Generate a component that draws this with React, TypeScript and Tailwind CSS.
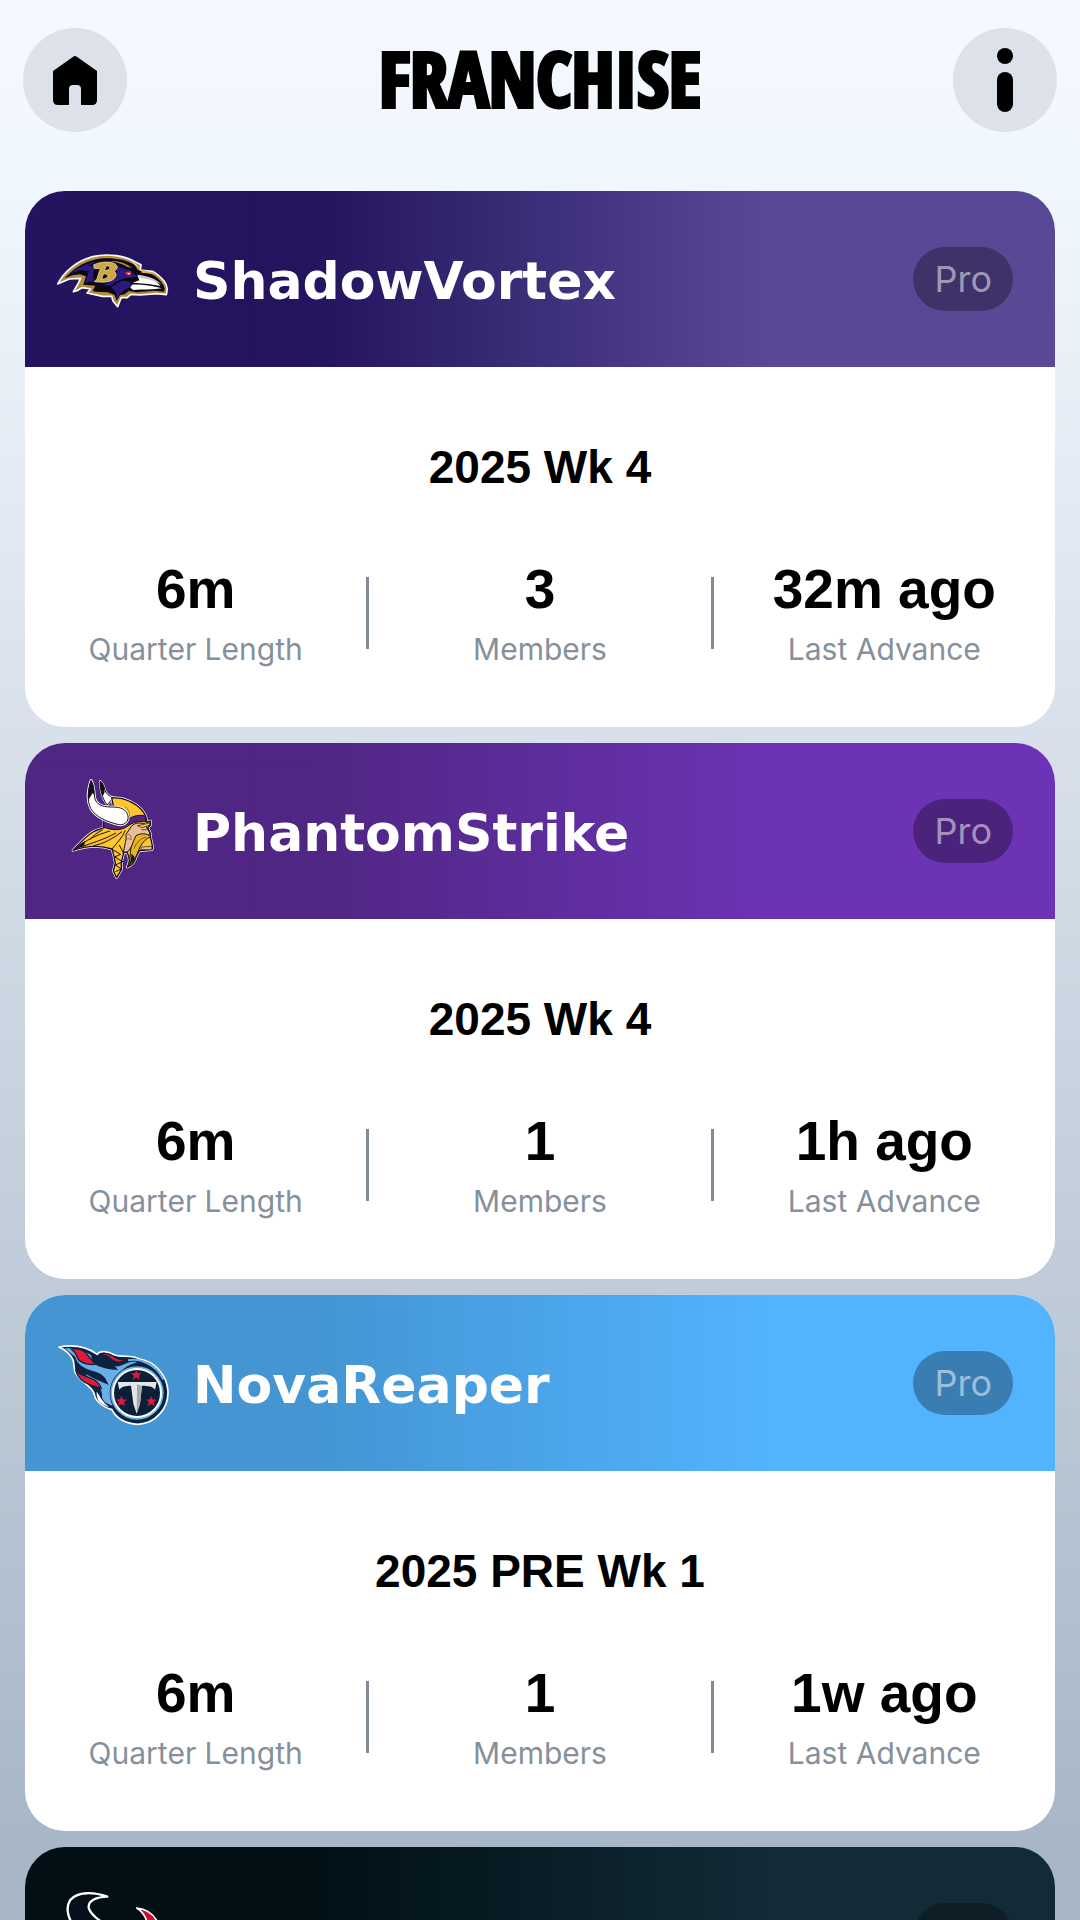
import React from 'react';

interface Franchise {
  id: string;
  name?: string;
  level: string;
  season?: string;
  gradient: string;
  logo: React.ReactNode;
  stats?: { label: string; value: string }[];
}

const RavenLogo: React.FC = () => (
  <svg viewBox="51 40 336 180" className="w-full" aria-hidden="true">
    {/* Outer silhouette */}
    <path
      d="M53 145C72 108 110 76 158 63C203 52 256 60 288 80L303 87L301 103L340 108C362 122 380 140 382 160L379 177L352 174L300 178L272 176L262 186L244 186L239 197L233 213L219 196L215 182L188 182L164 177L141 172L152 160L126 156L113 164L100 168L112 148L122 128L88 130Z"
      fill="#b08d3a"
      stroke="#fff"
      strokeWidth="5"
      strokeLinejoin="round"
    />
    <path
      d="M74 128C105 92 142 75 176 69C215 65 256 70 284 88L293 103L332 114C356 126 372 144 374 160L372 168L345 165L290 170L266 166L254 176L240 178L230 196L224 178L204 170L170 168L158 166L166 150L130 147L138 122L120 116L98 119Z"
      fill="#0b0713"
    />
    <path
      d="M92 113C118 91 146 82 172 78C160 84 150 86 140 91C152 91 160 92 164 95L158 118L150 108L124 103Z"
      fill="#2a1a80"
    />
    <path d="M145 108L160 112L160 139L148 137L136 142Z" fill="#2a1a80" />
    <path d="M233 92C250 96 258 104 266 102L292 124L255 128C236 134 225 140 212 150L188 148L228 128Z" fill="#2a1a80" />
    <path d="M214 156C235 136 252 134 270 138L276 154L258 160L240 174L231 190L228 170Z" fill="#2a1a80" />
    <path d="M207 76C232 74 258 82 276 96L262 94C246 84 230 80 207 76Z" fill="#b08d3a" />
    {/* Shield letter */}
    <path
      fillRule="evenodd"
      d="M160 88C178 79 203 76 222 83C234 88 236 100 222 107C234 113 228 130 213 135C198 141 180 140 163 138L171 129L181 98L164 99ZM200 90L193 104C208 106 218 92 200 90ZM191 114L185 130C202 132 213 116 191 114Z"
      fill="#d0a545"
      stroke="#f4ead0"
      strokeWidth="2"
    />
    {/* Beak */}
    <path d="M292 118C318 122 346 132 362 151L325 145L278 141L298 134Z" fill="#fff" />
    <path d="M276 147C305 146 338 151 366 158C340 163 310 161 280 163L271 156Z" fill="#fff" />
    <path d="M298 118C325 121 348 130 365 146C347 137 322 129 298 127Z" fill="#c9c9d2" />
    <path d="M302 101L334 110L344 115L305 111Z" fill="#d9b64d" />
    <path d="M255 110L274 107L271 120L260 118Z" fill="#d5303e" />
    <path d="M262 112L271 112L267 117Z" fill="#fff" />
    <path d="M280 81L301 99M270 73L292 91" stroke="#fff" strokeWidth="2" />
  </svg>
);

const VikingLogo: React.FC = () => (
  <svg viewBox="-9 28 336 312" className="w-full" aria-hidden="true">
    {/* Far horn */}
    <path
      d="M121 34C120 60 126 84 141 106L160 84C146 80 138 72 134 58C132 48 128 40 121 34Z"
      fill="#fff"
      stroke="#fff"
      strokeWidth="6"
      strokeLinejoin="round"
    />
    <path d="M121 34C120 60 126 84 141 106L160 84C146 80 138 72 134 58C132 48 128 40 121 34Z" fill="#fff" stroke="#111" strokeWidth="3" />
    <path d="M121 34C119 50 122 66 128 80L134 68C134 52 130 42 121 34Z" fill="#111" />
    {/* Head outline */}
    <path
      d="M155 84L183 86C214 94 242 108 257 139L261 158L272 154L271 167L263 175L270 188L272 205L278 232L276 240L238 243L228 262C224 278 214 288 202 292C212 275 208 260 200 246L191 250L184 278L184 300L170 324L160 304L166 280L162 260L156 238C120 226 80 228 39 242C66 214 80 196 104 184L132 174L132 150L160 110Z"
      fill="#ffc62f"
      stroke="#fff"
      strokeWidth="8"
      strokeLinejoin="round"
    />
    <path
      d="M155 84L183 86C214 94 242 108 257 139L261 158L272 154L271 167L263 175L270 188L272 205L278 232L276 240L238 243L228 262C224 278 214 288 202 292C212 275 208 260 200 246L191 250L184 278L184 300L170 324L160 304L166 280L162 260L156 238C120 226 80 228 39 242C66 214 80 196 104 184L132 174L132 150L160 110Z"
      fill="#ffc62f"
      stroke="#15101c"
      strokeWidth="4"
      strokeLinejoin="round"
    />
    {/* Helmet band */}
    <path d="M131 146L205 148C222 138 238 134 256 139L258 157C235 153 218 158 202 170C180 186 150 180 131 172Z" fill="#4f2683" stroke="#15101c" strokeWidth="3" />
    <path d="M196 110C206 120 210 132 209 146" fill="none" stroke="#b07c10" strokeWidth="3" />
    {/* Face */}
    <path
      d="M214 170C226 158 240 158 256 164L262 178L270 190L266 197L240 200C226 208 224 222 214 232L204 246L190 248C194 226 200 210 198 194Z"
      fill="#e9bf9b"
      stroke="#15101c"
      strokeWidth="3"
    />
    <path d="M232 168L270 160L266 168L246 174ZM244 180L260 180" fill="#ffc62f" stroke="#15101c" strokeWidth="2" />
    <path d="M199 196C208 190 216 200 213 210C208 206 202 206 199 210" fill="none" stroke="#9d6a44" strokeWidth="3" />
    {/* Moustache and beard */}
    <path
      d="M228 198C242 190 262 190 272 202C258 206 250 216 240 232C232 250 226 274 204 290C214 268 208 252 214 232C218 220 222 210 228 198Z"
      fill="#e9b324"
      stroke="#15101c"
      strokeWidth="3"
    />
    <path d="M214 252C222 258 226 262 222 270L204 290C214 274 214 264 214 252Z" fill="#15101c" />
    <path d="M245 232L276 230L275 240L242 240Z" fill="#e9bf9b" stroke="#15101c" strokeWidth="2" />
    <path d="M222 236C230 218 242 206 258 202" fill="none" stroke="#7d5b0c" strokeWidth="3" />
    {/* Hair strands and braid */}
    <path
      d="M44 240C78 210 110 196 150 184M62 232C96 220 132 210 168 190M100 228C130 222 154 210 186 186M156 238C170 220 186 206 196 182M128 180C112 190 100 196 90 210"
      fill="none"
      stroke="#15101c"
      strokeWidth="3"
    />
    <path d="M44 240C58 226 66 218 76 214L72 228Z" fill="#15101c" />
    <path d="M158 240L182 254L164 262L188 276L166 286L184 298L166 306M178 226L190 250" fill="none" stroke="#15101c" strokeWidth="3" />
    {/* Near horn */}
    <path
      d="M93 32C84 58 80 92 92 116C106 142 140 156 176 165C198 168 210 150 202 132C194 114 174 112 152 112C126 112 108 104 104 84C102 62 102 46 93 32Z"
      fill="#fff"
      stroke="#fff"
      strokeWidth="8"
      strokeLinejoin="round"
    />
    <path
      d="M93 32C84 58 80 92 92 116C106 142 140 156 176 165C198 168 210 150 202 132C194 114 174 112 152 112C126 112 108 104 104 84C102 62 102 46 93 32Z"
      fill="#fff"
      stroke="#15101c"
      strokeWidth="3"
    />
    <path d="M93 32C86 50 82 70 85 92L98 70L103 76C102 56 100 44 93 32Z" fill="#15101c" />
  </svg>
);

const TitanLogo: React.FC = () => (
  <svg viewBox="21 19 336 280" className="w-full" aria-hidden="true">
    {/* Flame silhouette */}
    <path
      d="M27 52C70 44 108 50 142 74C150 62 172 64 194 76C218 84 248 74 268 88C310 94 350 132 354 184C356 236 316 282 264 284C222 282 196 262 186 240C160 232 136 218 132 190C120 164 82 152 74 124L70 92C60 72 46 60 27 52Z"
      fill="#0c2340"
      stroke="#fff"
      strokeWidth="5"
      strokeLinejoin="round"
    />
    <path
      d="M44 56C92 52 120 72 148 96C176 100 190 112 206 110C226 106 236 92 262 98C236 104 206 124 192 152C180 178 182 206 188 228C166 220 154 214 156 192C152 164 120 150 106 134C124 138 146 150 168 158C174 146 150 128 128 124C104 118 80 104 76 82Z"
      fill="#6aaee6"
    />
    <path d="M64 58C92 56 104 62 116 80C124 92 134 98 146 102C122 108 94 102 84 88C80 76 74 66 64 58Z" fill="#e31837" stroke="#0c2340" strokeWidth="4" />
    <path d="M150 74C166 66 184 76 196 84C208 90 218 92 228 92C212 100 196 98 186 90C176 80 166 76 150 74Z" fill="#e31837" stroke="#0c2340" strokeWidth="4" />
    <path d="M77 120C88 140 120 140 138 154C148 162 152 168 154 176C128 168 84 160 77 120Z" fill="#e31837" stroke="#0c2340" strokeWidth="4" />
    <path d="M122 74C142 80 150 92 170 98C186 104 196 108 204 122C180 118 150 118 128 98" fill="#0c2340" />
    <path d="M98 122C130 120 166 136 176 166C158 156 124 150 98 122Z" fill="#0c2340" />
    <path d="M140 186C152 200 154 216 178 232C154 226 138 212 140 186Z" fill="#fff" />
    <path d="M234 92C268 84 320 104 340 150" fill="none" stroke="#6aaee6" strokeWidth="6" />
    {/* Shield disc */}
    <circle cx="261" cy="190" r="82" fill="#0c2340" />
    <circle cx="261" cy="190" r="80" fill="#6aaee6" />
    <circle cx="261" cy="190" r="72" fill="#0b1f38" stroke="#fff" strokeWidth="6" />
    <path d="M203 157L320 157L315 180C308 170 296 168 276 168L270 222L260 252L250 222L243 168C226 168 216 170 208 180Z" fill="#e4e6e8" />
    <path d="M261 164L276 168L270 222L260 252Z" fill="#a6a9ae" />
    <path d="M259 120L263 131L275 131L266 138L270 150L259 143L248 150L252 138L243 131L255 131Z" fill="#e31837" />
    <path d="M214 198L219 209L231 210L222 217L225 229L214 223L204 229L207 217L198 210L210 209Z" fill="#e31837" />
    <path d="M304 198L308 209L320 210L311 217L314 229L304 223L293 229L297 217L288 210L300 209Z" fill="#e31837" />
  </svg>
);

const TexanLogo: React.FC = () => (
  <svg viewBox="111 205 336 280" className="w-full" aria-hidden="true">
    <path
      d="M262 231C222 217 172 214 150 242C134 268 146 306 176 336C200 356 226 370 250 400L276 440L284 330C250 312 212 288 206 264C204 242 230 232 262 231Z"
      fill="#05101a"
      stroke="#fff"
      strokeWidth="7"
      strokeLinejoin="round"
    />
    <path
      d="M350 265C380 268 398 282 410 302C420 336 376 364 340 390L290 440L292 340C340 336 384 318 378 298C372 284 362 272 350 265Z"
      fill="#c8102e"
      stroke="#fff"
      strokeWidth="5"
      strokeLinejoin="round"
    />
  </svg>
);

const franchises: Franchise[] = [
  {
    id: 'ravens',
    name: 'ShadowVortex',
    level: 'Pro',
    season: '2025 Wk 4',
    gradient: 'from-[#24135f] to-[#594896]',
    logo: <RavenLogo />,
    stats: [
      { label: 'Quarter Length', value: '6m' },
      { label: 'Members', value: '3' },
      { label: 'Last Advance', value: '32m ago' },
    ],
  },
  {
    id: 'vikings',
    name: 'PhantomStrike',
    level: 'Pro',
    season: '2025 Wk 4',
    gradient: 'from-[#4f2683] to-[#6c33b4]',
    logo: <VikingLogo />,
    stats: [
      { label: 'Quarter Length', value: '6m' },
      { label: 'Members', value: '1' },
      { label: 'Last Advance', value: '1h ago' },
    ],
  },
  {
    id: 'titans',
    name: 'NovaReaper',
    level: 'Pro',
    season: '2025 PRE Wk 1',
    gradient: 'from-[#4495d2] to-[#52b3ff]',
    logo: <TitanLogo />,
    stats: [
      { label: 'Quarter Length', value: '6m' },
      { label: 'Members', value: '1' },
      { label: 'Last Advance', value: '1w ago' },
    ],
  },
  {
    id: 'texans',
    level: 'Pro',
    gradient: 'from-[#021016] to-[#132b37]',
    logo: <TexanLogo />,
  },
];

const FranchiseCard: React.FC<{ franchise: Franchise }> = ({ franchise }) => (
  <article className="bg-white rounded-[40px] overflow-hidden shrink-0">
    <header
      className={`flex items-center min-h-44 pl-8 pr-[42px] bg-linear-to-r from-28% to-72% ${franchise.gradient}`}
    >
      <div className="w-28 shrink-0 mr-6">{franchise.logo}</div>
      <h2 className="flex-1 pt-1 font-['DejaVu_Sans',sans-serif] font-bold text-[52px] leading-[64px] text-white">
        {franchise.name}
      </h2>
      <span className="rounded-full bg-black/30 px-[21px] h-16 flex items-center text-[36px] leading-none text-white/50">
        {franchise.level}
      </span>
    </header>

    {franchise.stats && (
      <div className="pt-[72px] pb-[58px] text-center">
        <p className="font-['Liberation_Sans',sans-serif] font-bold text-[46px] leading-[56px] text-black">
          {franchise.season}
        </p>
        <div className="flex items-center mt-[62px]">
          {franchise.stats.map((stat, i) => (
            <React.Fragment key={stat.label}>
              {i > 0 && <span className="w-[3px] h-[72px] bg-[#7f8b98]"></span>}
              <div className="flex-1">
                <p className="font-['Liberation_Sans',sans-serif] font-bold text-[55px] leading-[64px] text-black">
                  {stat.value}
                </p>
                <p className="mt-2 text-[30px] leading-[40px] text-[#85909c]">{stat.label}</p>
              </div>
            </React.Fragment>
          ))}
        </div>
      </div>
    )}
  </article>
);

const App: React.FC = () => {
  return (
    <div className="h-screen overflow-hidden flex flex-col font-['Inter',sans-serif] bg-[linear-gradient(to_bottom,#f5f9ff_0%,#f1f7fe_9%,#d8e1eb_38%,#c0ccd9_66%,#a8b7c8_96%)]">
      <header className="flex items-center justify-between px-[23px] pt-7 pb-[59px]">
        <button type="button" aria-label="Home" className="w-26 h-26 rounded-full bg-[#dde2ea]">
          <svg viewBox="0 0 104 104" className="w-full h-full" aria-hidden="true">
            <path
              d="M50.500 28.500Q52 27.500 53.500 28.500L74 43V72Q74 77 69 77H58V61Q58 57 54 57H50Q46 57 46 61V77H35Q30 77 30 72V43Z"
              fill="#000"
            />
          </svg>
        </button>

        <h1 className="pb-1 font-['Open_Sans_Condensed',sans-serif] font-black text-[76px] leading-[100px] text-black [-webkit-text-stroke:4px_#000]">
          FRANCHISE
        </h1>

        <button type="button" aria-label="Info" className="w-26 h-26 rounded-full bg-[#dde2ea]">
          <svg viewBox="0 0 104 104" className="w-full h-full" aria-hidden="true">
            <circle cx="52" cy="28" r="8" />
            <rect x="44" y="44" width="16" height="40" rx="8" />
          </svg>
        </button>
      </header>

      <main className="flex flex-col gap-4 px-[25px]">
        {franchises.map((franchise) => (
          <FranchiseCard key={franchise.id} franchise={franchise} />
        ))}
      </main>
    </div>
  );
};

export default App;
